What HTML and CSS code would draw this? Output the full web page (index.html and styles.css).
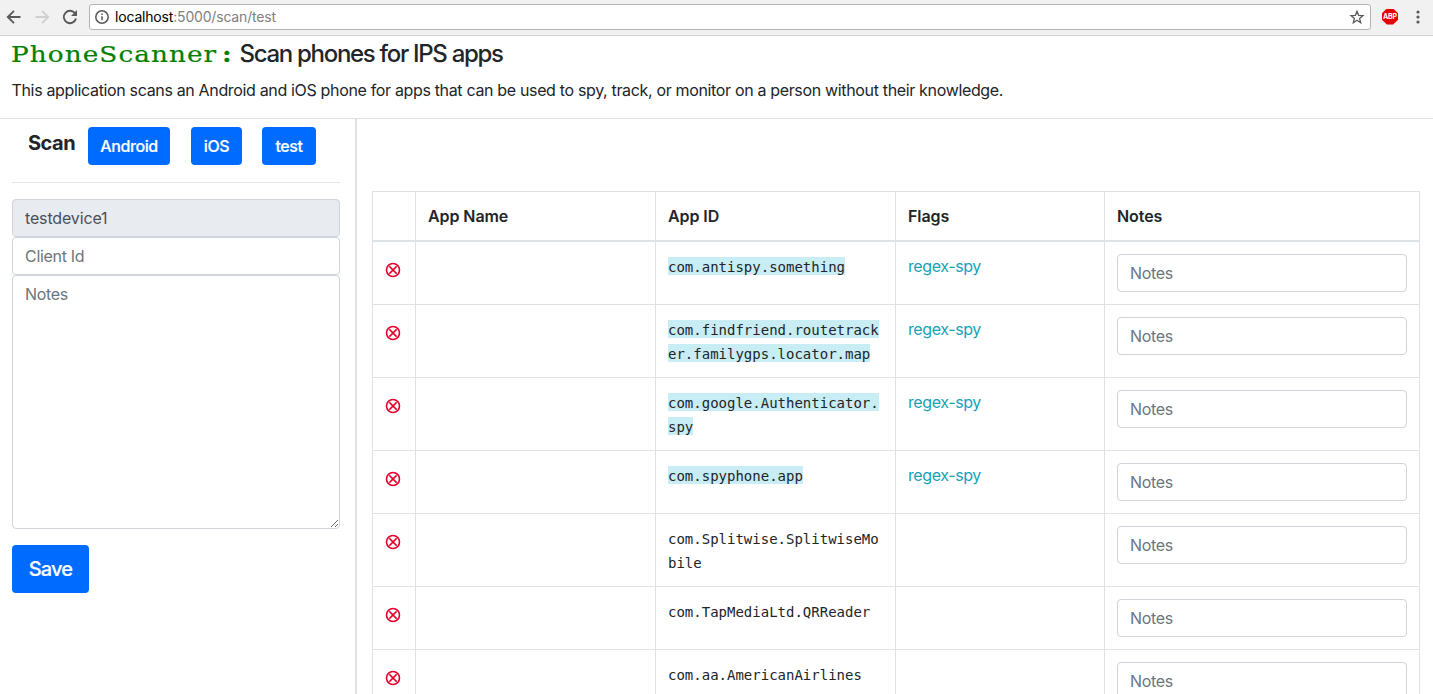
FILE: index.html
```html
<!DOCTYPE html>
<html lang="en">
<head>
<meta charset="utf-8">
<title>PhoneScanner</title>
<link rel="stylesheet" href="styles.css">
</head>
<body>
<div class="toolbar">
  <svg class="nav back" width="16" height="16" viewBox="0 0 16 16"><path d="M14.5 8H2M8 1.8L1.8 8L8 14.2"/></svg>
  <svg class="nav forward" width="16" height="16" viewBox="0 0 16 16"><path d="M1.5 8H14M8 1.8L14.2 8L8 14.2"/></svg>
  <svg class="nav reload" width="16" height="16" viewBox="0 0 16 16"><path d="M13.2 4.6A6.2 6.2 0 1 0 14 9.6"/><path class="solid" d="M15 1v6H9z"/></svg>
  <div class="address">
    <svg class="info" width="16" height="16" viewBox="0 0 16 16"><circle cx="8" cy="8" r="6.2"/><path d="M8 7.2v4M8 4.4v1.7"/></svg>
    <span class="url"><b>localhost</b>:5000/scan/test</span>
    <svg class="star" width="16" height="16" viewBox="0 0 16 16"><path d="M8 2.2l1.6 4.1 4.4.3-3.4 2.8 1.1 4.3L8 11.3l-3.7 2.4 1.1-4.3L2 6.6l4.4-.3z"/></svg>
  </div>
  <span class="abp">ABP</span>
  <svg class="menu" width="4" height="16" viewBox="0 0 4 16"><circle cx="2" cy="3" r="1.6"/><circle cx="2" cy="8" r="1.6"/><circle cx="2" cy="13" r="1.6"/></svg>
</div>
<header class="intro">
  <h1><span class="brand"><span class="wide">PhoneScanner<span class="colon">:</span></span></span><span class="tagline">Scan phones for IPS apps</span></h1>
  <p>This application scans an Android and iOS phone for apps that can be used to spy, track, or monitor on a person without their knowledge.</p>
</header>
<main class="layout">
  <aside class="sidebar">
    <div class="scan">
      <h2>Scan</h2>
      <button class="btn android">Android</button>
      <button class="btn ios">iOS</button>
      <button class="btn test">test</button>
    </div>
    <form class="client">
      <input class="field" value="testdevice1" readonly>
      <input class="field" placeholder="Client Id">
      <textarea class="field area" placeholder="Notes"></textarea>
      <button class="btn save" type="button">Save</button>
    </form>
  </aside>
  <section class="results">
    <table>
      <colgroup><col class="c-del"><col class="c-name"><col class="c-id"><col class="c-flags"><col class="c-notes"></colgroup>
      <thead><tr><th></th><th>App Name</th><th>App ID</th><th>Flags</th><th>Notes</th></tr></thead>
      <tbody>
        <tr><td><svg class="del" width="16" height="16" viewBox="0 0 16 16"><use href="#x"/></svg></td><td></td><td class="id"><code class="hit">com.antispy.something</code></td><td class="flag">regex-spy</td><td><input class="field" placeholder="Notes"></td></tr>
        <tr class="tall"><td><svg class="del" width="16" height="16" viewBox="0 0 16 16"><use href="#x"/></svg></td><td></td><td class="id"><code class="hit">com.findfriend.routetracker.familygps.locator.map</code></td><td class="flag">regex-spy</td><td><input class="field" placeholder="Notes"></td></tr>
        <tr class="tall"><td><svg class="del" width="16" height="16" viewBox="0 0 16 16"><use href="#x"/></svg></td><td></td><td class="id"><code class="hit">com.google.Authenticator.spy</code></td><td class="flag">regex-spy</td><td><input class="field" placeholder="Notes"></td></tr>
        <tr><td><svg class="del" width="16" height="16" viewBox="0 0 16 16"><use href="#x"/></svg></td><td></td><td class="id"><code class="hit">com.spyphone.app</code></td><td class="flag">regex-spy</td><td><input class="field" placeholder="Notes"></td></tr>
        <tr class="tall"><td><svg class="del" width="16" height="16" viewBox="0 0 16 16"><use href="#x"/></svg></td><td></td><td class="id"><code>com.Splitwise.SplitwiseMobile</code></td><td></td><td><input class="field" placeholder="Notes"></td></tr>
        <tr><td><svg class="del" width="16" height="16" viewBox="0 0 16 16"><use href="#x"/></svg></td><td></td><td class="id"><code>com.TapMediaLtd.QRReader</code></td><td></td><td><input class="field" placeholder="Notes"></td></tr>
        <tr><td><svg class="del" width="16" height="16" viewBox="0 0 16 16"><use href="#x"/></svg></td><td></td><td class="id"><code>com.aa.AmericanAirlines</code></td><td></td><td><input class="field" placeholder="Notes"></td></tr>
      </tbody>
    </table>
  </section>
</main>
<svg class="defs" width="0" height="0"><symbol id="x" viewBox="0 0 16 16"><circle cx="8" cy="8" r="6.5"/><path d="M4.4 4.4l7.2 7.2M11.6 4.4l-7.2 7.2"/></symbol></svg>
</body>
</html>
```
FILE: styles.css
```css
* { box-sizing: border-box; }
body {
  margin: 0;
  height: 694px;
  overflow: hidden;
  display: flex;
  flex-direction: column;
  background: #fff;
  color: #212529;
  font: 16px/24px Inter, "Liberation Sans", sans-serif;
  letter-spacing: -0.34px;
}
svg { fill: none; flex: none; }
.toolbar {
  height: 36px;
  flex: none;
  display: flex;
  align-items: center;
  padding: 0 13px 2px 6px;
  background: #f1f1f1;
  border-bottom: 1px solid #d0d0d0;
}
.nav { stroke: #5a5a5a; stroke-width: 1.9; }
.forward { stroke: #d0d0d0; margin-left: 12px; }
.reload { margin: 0 11px 0 12px; }
.reload .solid { fill: #5a5a5a; stroke: none; }
.address {
  width: 1282px;
  height: 26px;
  display: flex;
  align-items: center;
  padding: 0 5px 0 4px;
  background: #fff;
  border: 1px solid #b3b3b3;
  border-radius: 3px;
}
.info { stroke: #5a5a5a; stroke-width: 1.5; }
.url { flex: 1; margin-left: 5px; color: #808080; font-size: 14px; letter-spacing: -0.18px; }
.url b { color: #000; font-weight: 400; }
.star { stroke: #5a5a5a; stroke-width: 1.3; }
.abp {
  width: 16px;
  height: 16px;
  margin-left: 11px;
  background: #e60000;
  color: #fff;
  font-size: 7px;
  font-weight: 700;
  line-height: 16px;
  text-align: center;
  letter-spacing: -0.2px;
  clip-path: polygon(30% 0, 70% 0, 100% 30%, 100% 70%, 70% 100%, 30% 100%, 0 70%, 0 30%);
}
.menu { fill: #5a5a5a; margin-left: 18px; }
.intro { height: 83px; flex: none; padding: 3px 11.5px 0; border-bottom: 1px solid #dee2e6; }
h1 { display: flex; align-items: baseline; margin: 0; font-size: 24px; line-height: 30px; font-weight: 500; letter-spacing: -1.3px; }
.brand { width: 229px; margin-left: -1px; flex: none; white-space: nowrap; color: green; font: 400 22.5px/30px "DejaVu Serif", serif; letter-spacing: 0.9px; -webkit-text-stroke: 0.2px green; }
.wide { display: inline-block; transform: scaleX(1.17); transform-origin: left; }
.colon { margin-left: 4px; font-weight: 700; }
.intro p { margin: 9px 0 0; white-space: nowrap; }
.layout { flex: 1; min-height: 0; display: flex; }
.sidebar { width: 357px; flex: none; padding: 8px 15px 0 12px; border-right: 2px solid #dee2e6; }
.scan { height: 56px; display: flex; align-items: flex-start; border-bottom: 1px solid #e5e5e5; padding-left: 16px; }
h2 { width: 60px; margin: 4px 0 0; font-size: 20px; line-height: 24px; font-weight: 700; letter-spacing: -0.5px; }
.btn {
  height: 38px;
  padding: 0;
  border: 0;
  border-radius: 4px;
  background: #006bff;
  color: #fff;
  font: 500 16px/24px Inter, sans-serif;
  letter-spacing: -0.4px;
  -webkit-text-stroke: 0.2px #fff;
}
.android { width: 82px; }
.ios { width: 51px; margin-left: 21px; }
.test { width: 54px; margin-left: 20px; }
.client { padding-top: 16px; width: 328px; }
.field {
  display: block;
  width: 100%;
  height: 38px;
  margin: 0;
  padding: 6px 12px;
  border: 1px solid #ced4da;
  border-radius: 4px;
  background: #fff;
  color: #495057;
  font: 16px/24px Inter, sans-serif;
  letter-spacing: -0.3px;
}
.field::placeholder { color: #6c757d; opacity: 1; }
.field[readonly] { background: #e8ebf0; letter-spacing: -0.15px; }
.area { height: 254px; resize: vertical; }
.save { width: 77px; height: 48px; margin-top: 16px; font-size: 20px; letter-spacing: -0.8px; }
.results { padding: 72px 0 0 15px; }
table { width: 1047px; table-layout: fixed; border-collapse: collapse; }
.c-del { width: 43px; }
.c-name, .c-id { width: 240px; }
.c-flags { width: 209px; }
.c-notes { width: 315px; }
th, td { padding: 12px; border: 1px solid #dee2e6; text-align: left; vertical-align: top; }
thead tr { height: 49px; }
th { font-weight: 600; border-bottom-width: 2px; letter-spacing: -0.08px; }
tbody tr { height: 63px; }
tbody .tall { height: 73px; }
.del { display: block; margin: 8px 0 0; stroke: #e4002b; stroke-width: 1.6; }
.id { padding: 13px 12px 11px; font: 14px/24px "DejaVu Sans Mono", monospace; letter-spacing: 0; }
code { font: inherit; overflow-wrap: anywhere; }
.hit { background: #c9edf4; padding-top: 2px; }
.flag { color: #17a2b8; letter-spacing: -0.4px; }
.defs { position: absolute; }
```
